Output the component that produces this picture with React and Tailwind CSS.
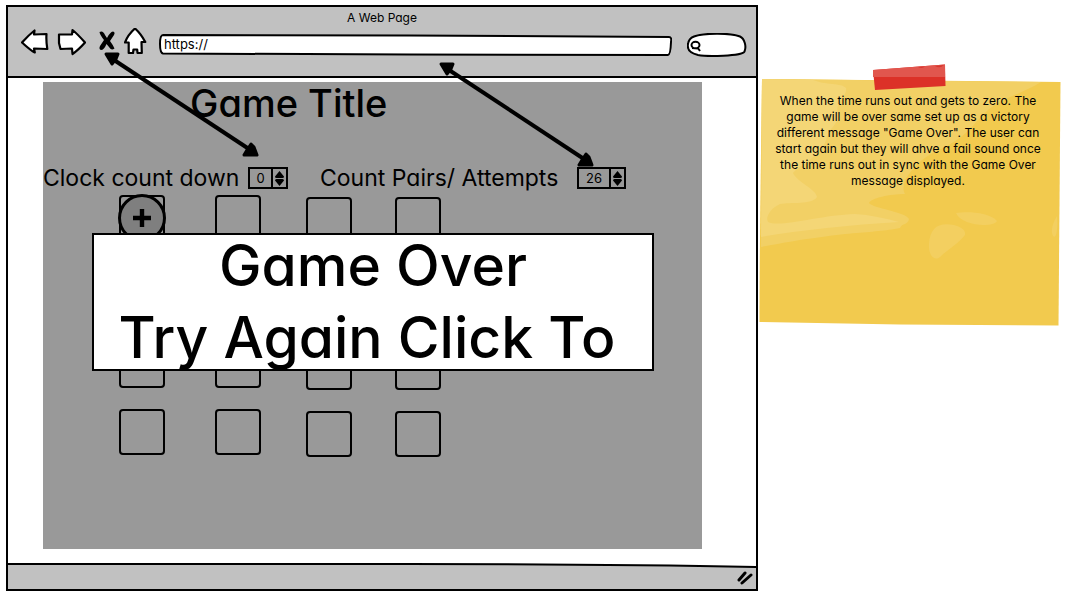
import React from "react";

const cards = Array.from({ length: 16 }, (_, i) => i);

function BackIcon() {
  return (
    <svg width="28" height="28" viewBox="21 27 28 28" fill="white" stroke="black" strokeWidth="2.2" strokeLinejoin="round" aria-hidden="true">
      <path d="M22 41.5 C26 37 30 33 34.5 29.5 L34 33.5 L46.5 33 Q46 40 47.3 48 L34 47.5 L34.8 51.5 C30 49 26 45 22 41.5Z" />
    </svg>
  );
}

function ForwardIcon() {
  return (
    <svg width="29" height="28" viewBox="57 27 29 28" fill="white" stroke="black" strokeWidth="2.2" strokeLinejoin="round" aria-hidden="true">
      <path d="M59 33.5 L72 33.5 L72.5 29 C77 32.5 81 37 85 41.5 C81 46 77 50 72.5 53 L72 47.5 L60.5 48 L59 42Z" />
    </svg>
  );
}

function StopIcon() {
  return (
    <svg width="18" height="28" viewBox="98 27 18 28" fill="black" aria-hidden="true">
      <path d="M99.5 31 Q103 29 105 34 L107 37 Q110 31 113 30.5 Q115.5 31 114 34 L110 40 Q113 44 114.5 47.5 Q111 50 109 46 L106.5 43 Q104 49 101 49 Q98.5 48 100 45 L104 39 Q100 34 99.5 31Z" />
    </svg>
  );
}

function HomeIcon() {
  return (
    <svg width="24" height="28" viewBox="124 28 24 28" fill="white" stroke="black" strokeWidth="2.2" strokeLinejoin="round" aria-hidden="true">
      <path d="M135 28.5 C139 32 142 36 145.3 42 L141.5 42 L141.8 53 L137.5 53 L137.2 49.5 L133.5 49.5 L133 53 L128.7 53 L128.7 42.5 L125 42.5 C127 37 131 32 135 28.5Z" />
    </svg>
  );
}

function Spinner({ id, value, wide }) {
  return (
    <div className="flex h-[22px] items-stretch border-2 border-black">
      <input
        id={id}
        defaultValue={value}
        inputMode="numeric"
        className={(wide ? "w-[30px]" : "w-[21px]") + " bg-transparent text-center text-[13px] leading-4 outline-none"}
      />
      <div className="flex w-[15px] flex-col items-center justify-center gap-px border-l-2 border-black">
        <button aria-label="Increase" className="block">
          <svg width="9" height="7" viewBox="0 0 9 7" aria-hidden="true"><path d="M4.5 0 L9 5.5 Q9 7 7.5 7 H1.5 Q0 7 0 5.5Z" /></svg>
        </button>
        <button aria-label="Decrease" className="block">
          <svg width="9" height="7" viewBox="0 0 9 7" aria-hidden="true"><path d="M4.5 7 L9 1.5 Q9 0 7.5 0 H1.5 Q0 0 0 1.5Z" /></svg>
        </button>
      </div>
    </div>
  );
}

function Arrow({ className }) {
  return (
    <svg width="160" height="108" viewBox="0 0 160 108" className={className} stroke="black" strokeLinejoin="round" aria-hidden="true">
      <path d="M8 7 L149 100" strokeWidth="4" />
      <path d="M3 3 L15 3 L13 8 L9 13Z" strokeWidth="3" />
      <path d="M154 104 L141 104 L144 99 L148 93 L151 96Z" strokeWidth="3" />
    </svg>
  );
}

function BrowserHeader() {
  return (
    <header className="h-[71px] border-b-2 border-black bg-[#c1c1c1]">
      <h1 className="pt-[3px] text-center text-xs leading-4">A Web Page</h1>
      <div className="flex items-center pt-px pr-[9px] pl-[13px]">
        <button aria-label="Back"><BackIcon /></button>
        <button aria-label="Forward" className="ml-2"><ForwardIcon /></button>
        <button aria-label="Stop" className="ml-3"><StopIcon /></button>
        <button aria-label="Home" className="ml-2"><HomeIcon /></button>
        <div className="relative mt-[6px] ml-[11px] h-[22px] flex-1">
          <svg className="absolute inset-0 h-full w-full" viewBox="0 0 512 22" preserveAspectRatio="none" fill="white" stroke="black" strokeWidth="2" aria-hidden="true">
            <path d="M4 1 L250 1.5 L509 3 Q512 3 511 8 Q510.5 21 508 21 L250 20.5 L4 19.5 Q1 19 1 10 Q1 1 4 1Z" />
          </svg>
          <input aria-label="Address" defaultValue="https://" className="relative block h-5 w-full bg-transparent px-[5px] text-[13px] leading-4 outline-none" />
        </div>
        <div className="relative mt-[6px] ml-[15px] h-6 w-[60px]">
          <svg className="absolute inset-0" width="60" height="24" viewBox="687 33 60 24" fill="white" stroke="black" strokeWidth="2" aria-hidden="true">
            <path d="M694 36.5 C703 33 730 32.5 740 36.5 C745 39 746.5 47 744.5 51.5 C742 56.5 706 56.5 698 55 C689 53 687 49 688 44 C688.5 40 690 38 694 36.5Z" />
            <path d="M699.5 45 A4 3.3 0 1 1 691.5 45 A4 3.3 0 1 1 699.5 45 M697.5 47.5 L700 51 M692 48 L698 48.5" fill="none" />
          </svg>
          <input aria-label="Search" className="relative block h-full w-full bg-transparent pr-2 pl-[18px] text-xs outline-none" />
        </div>
      </div>
    </header>
  );
}

function GamePanel() {
  return (
    <main className="relative mt-[4px] mr-[54px] mb-[14px] ml-[35px] min-h-[467px] flex-1 bg-[#999999]">
      <h2 className="pl-[147px] text-[38px] leading-[42px] font-medium">Game Title</h2>
      <div className="mt-[38px] flex h-8 items-center text-[23px]">
        <label htmlFor="clock" className="w-[205px] whitespace-nowrap">Clock count down</label>
        <Spinner id="clock" value="0" />
        <label htmlFor="pairs" className="ml-[32px] w-[257px] whitespace-nowrap">Count Pairs/ Attempts</label>
        <Spinner id="pairs" value="26" wide />
      </div>
      <div className="mt-px grid grid-cols-[96px_91px_89px_46px] grid-rows-[74px_73px_67px_46px] pl-[76px]">
        {cards.map((card) => (
          <div key={card} className={card % 4 > 1 ? "pt-[2px]" : ""}>
            <button aria-label={"Card " + (card + 1)} className="relative block size-[46px] rounded-[4px] border-2 border-black">
              {card === 0 && (
                <span className="absolute -top-[3px] -left-[3px] flex size-[48px] items-center justify-center rounded-full border-[3px] border-black bg-[#7f7f7f]">
                  <svg width="20" height="20" viewBox="0 0 20 20" stroke="black" strokeWidth="4.4" aria-hidden="true">
                    <path d="M10 1 V19 M1 10 H19" />
                  </svg>
                </span>
              )}
            </button>
          </div>
        ))}
      </div>
      <section role="dialog" aria-label="Game Over" className="absolute top-[151px] right-[48px] left-[49px] flex h-[138px] flex-col items-center justify-center border-2 border-black bg-white text-center text-[57px] leading-[72px] font-medium whitespace-nowrap">
        <p>Game Over</p>
        <p className="pr-3">Try Again Click To</p>
      </section>
      <Arrow className="pointer-events-none absolute -top-[31px] left-[60px]" />
      <Arrow className="pointer-events-none absolute -top-[21px] left-[395px]" />
    </main>
  );
}

function StickyNote() {
  return (
    <aside className="relative mt-[59px] h-[262px] w-[302px] shrink-0 pt-[29px] pr-3 pl-2">
      <svg className="absolute inset-0" width="302" height="262" viewBox="759 64 302 262" aria-hidden="true">
        <path d="M762 79 L1060.5 82 L1058.5 325.5 L900 324.5 L759.5 322 C759.5 260 761 150 762 79Z" fill="#f2ca4e" />
        <path d="M762 79 L1041 82 C1020 95 998 99 985 113 C972 125 968 135 945 147 C920 158 913 168 905 180 C903 187 903 191 905 194 C890 194 871 198 869 203 C872 208 906 212 909 219 C908 225 902 223 900 228 C870 234 850 230 761 247Z" fill="#f2d065" />
        <path d="M762 79 L813 80 C825 85 842 83 846 88 C848 96 834 104 838 112 C843 120 828 128 826 140 C822 155 797 167 793 173 C797 182 816 189 817 197 C812 205 790 202 780 204 C771 208 765 217 768 222 C780 228 820 215 855 214 C870 215 885 218 899 222 C850 225 800 230 761 237Z" fill="#f4d676" />
        <path d="M929 244 C930 227 939 222 954 225 C961 227 966 230 965 235 C958 244 947 250 940 257 C934 262 928 254 929 244Z M956 213 C966 211 990 212 997 221 C993 228 961 226 956 213Z M1057 216 C1052 224 1050 233 1054 237 C1057 237 1058 225 1057 216Z" fill="#f3cf60" />
        <path d="M873 70 L945 64.5 L945.5 86 L875 90Z" fill="#dc3128" />
        <path d="M873 70 L945 64.5 L945 77 L873 77Z" fill="#e1564e" />
        <path d="M918 67 Q922 69 925 66.5Z M935 66 Q940 69 944 65Z" fill="#d8362e" />
      </svg>
      <p className="relative text-center text-xs leading-4">
        When the time runs out and gets to zero. The game will be over same set up as a victory different message "Game Over". The user can start again but they will ahve a fail sound once the time runs out in sync with the Game Over message displayed.
      </p>
    </aside>
  );
}

export default function App() {
  return (
    <div className="flex min-h-screen items-start gap-px bg-white pt-[5px] pr-[4px] pl-[6px] font-['Inter','Liberation_Sans',sans-serif] text-black [font-feature-settings:'cv11']">
      <div className="flex min-h-[586px] min-w-[720px] flex-1 flex-col border-2 border-black">
        <BrowserHeader />
        <GamePanel />
        <footer className="relative flex h-[26px] items-center justify-end bg-[#c1c1c1] pt-[3px] pr-[3px]">
          <svg className="absolute inset-x-0 top-0 h-[5px] w-full" viewBox="0 0 748 5" preserveAspectRatio="none" aria-hidden="true">
            <path d="M0 0 H748 V4 Q600 1 400 1 H0Z" fill="white" />
            <path d="M0 1 H400 Q600 1 748 4" fill="none" stroke="black" strokeWidth="2" />
          </svg>
          <svg width="16" height="14" viewBox="0 0 16 14" stroke="black" strokeWidth="3" strokeLinecap="round" aria-hidden="true">
            <path d="M2 9 L8 2 M5 12 L14 4" />
          </svg>
        </footer>
      </div>
      <StickyNote />
    </div>
  );
}
